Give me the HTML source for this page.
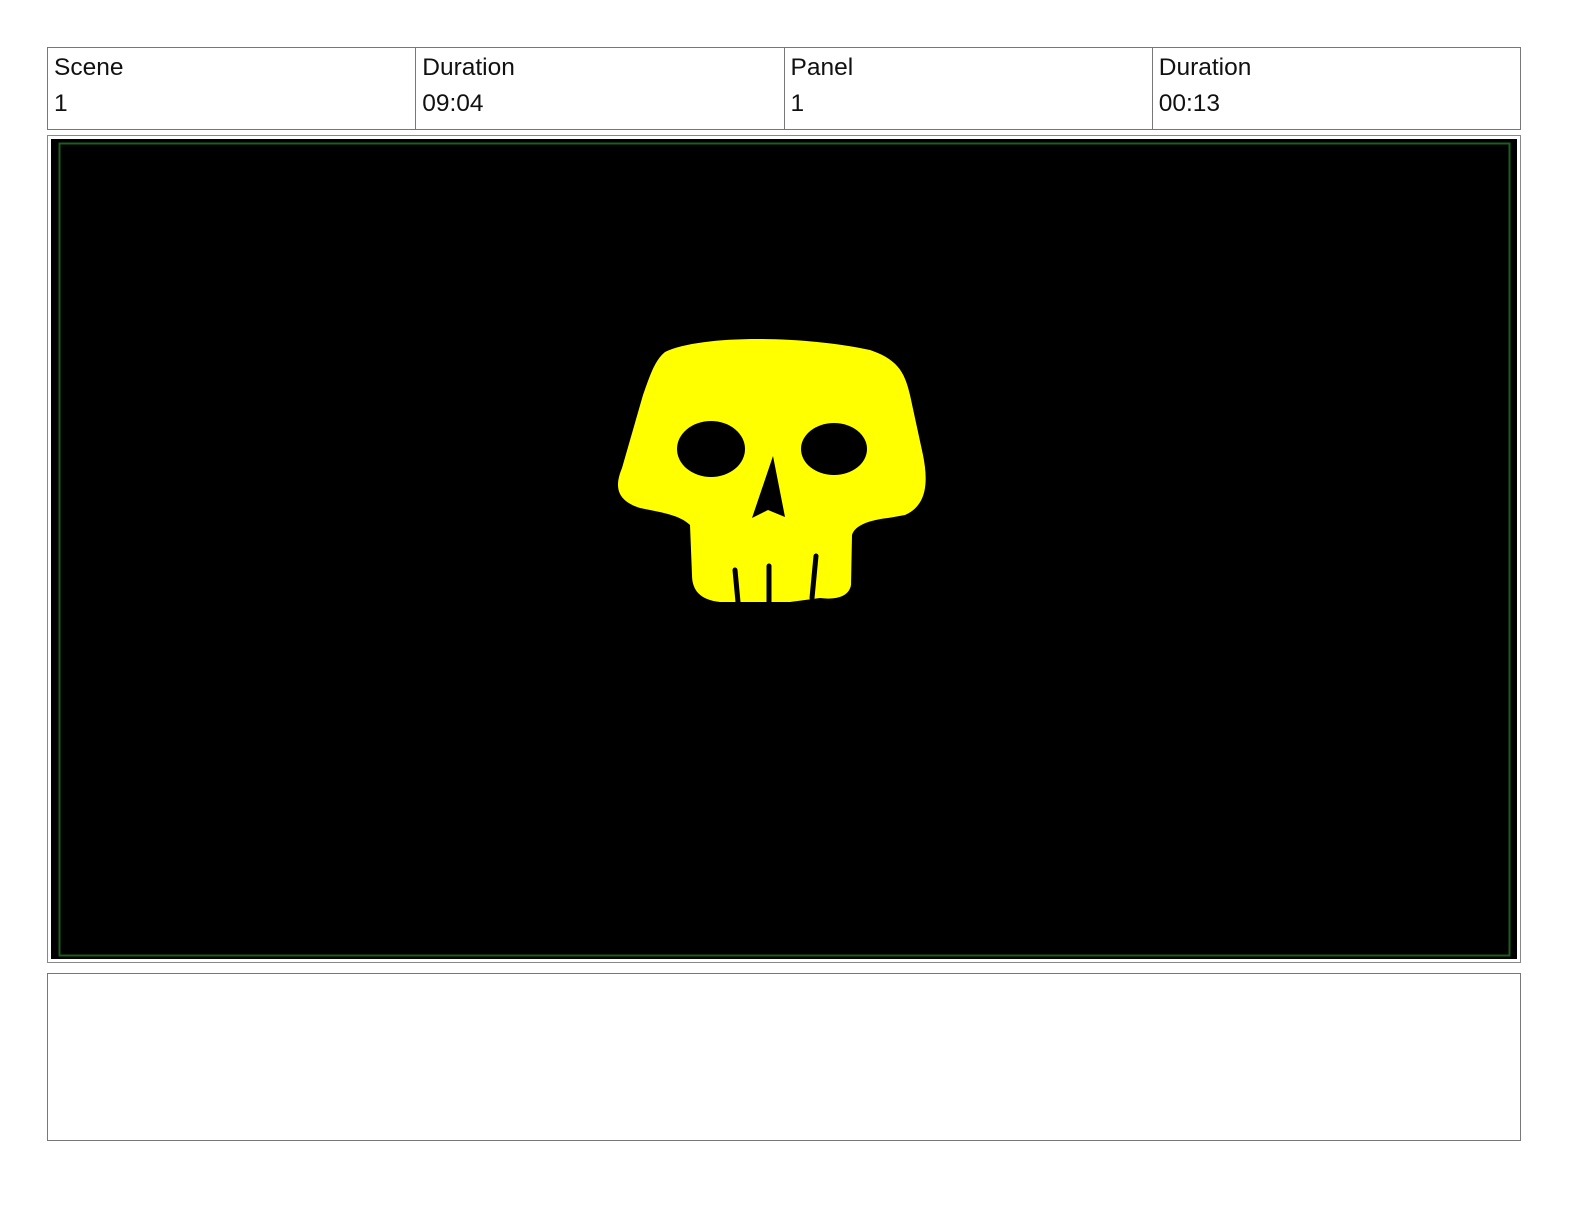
<!DOCTYPE html>
<html><head><style>
body{margin:0;width:1584px;height:1224px;background:#fff;font-family:"Liberation Sans",sans-serif;position:relative;overflow:hidden}
.hdr{position:absolute;left:47px;top:47px;width:1472px;height:81px;border:1px solid #777;display:flex}
.c{flex:1;border-left:1px solid #777;padding:2px 6px;font-size:24.5px;color:#111;line-height:36px}
.c:first-child{border-left:none}
.img{position:absolute;left:47px;top:135px;width:1472px;height:826px;border:1px solid #888}
.blk{position:absolute;left:3px;top:3px;right:3px;bottom:3px;background:#000}
.notes{position:absolute;left:47px;top:973px;width:1472px;height:166px;border:1px solid #777}
</style></head><body>
<div class="hdr">
<div class="c">Scene<br>1</div>
<div class="c">Duration<br>09:04</div>
<div class="c">Panel<br>1</div>
<div class="c">Duration<br>00:13</div>
</div>
<div class="img"><div class="blk"></div>
<svg width="1584" height="1224" style="position:absolute;left:-48px;top:-136px">
<rect x="59.5" y="143.5" width="1450" height="812" fill="none" stroke="#1d5e1d" stroke-width="2"/>
<path fill="#ffff00" d="M665,352 C700,335 800,335 870,350 C900,360 905,375 910,395 L923,455 C928,480 928,505 905,515 L888,518 C870,520 855,525 852,535 L851,585 C849,597 835,600 820,598 L790,602 L720,602 C700,600 692,590 692,575 L690,525 C680,515 660,512 640,508 C615,500 615,485 622,468 L643,395 C650,375 655,360 665,352 Z"/>
<ellipse cx="711" cy="449" rx="34" ry="28" fill="#000"/>
<ellipse cx="834" cy="449" rx="33" ry="26" fill="#000"/>
<path d="M773,456 L785,517 L768,510 L752,518 Z" fill="#000"/>
<g stroke="#000" stroke-width="5" stroke-linecap="round">
<line x1="735" y1="570" x2="738" y2="602"/>
<line x1="769" y1="566" x2="769" y2="603"/>
<line x1="816" y1="556" x2="812" y2="598"/>
</g>
</svg></div>
<div class="notes"></div>
</body></html>
